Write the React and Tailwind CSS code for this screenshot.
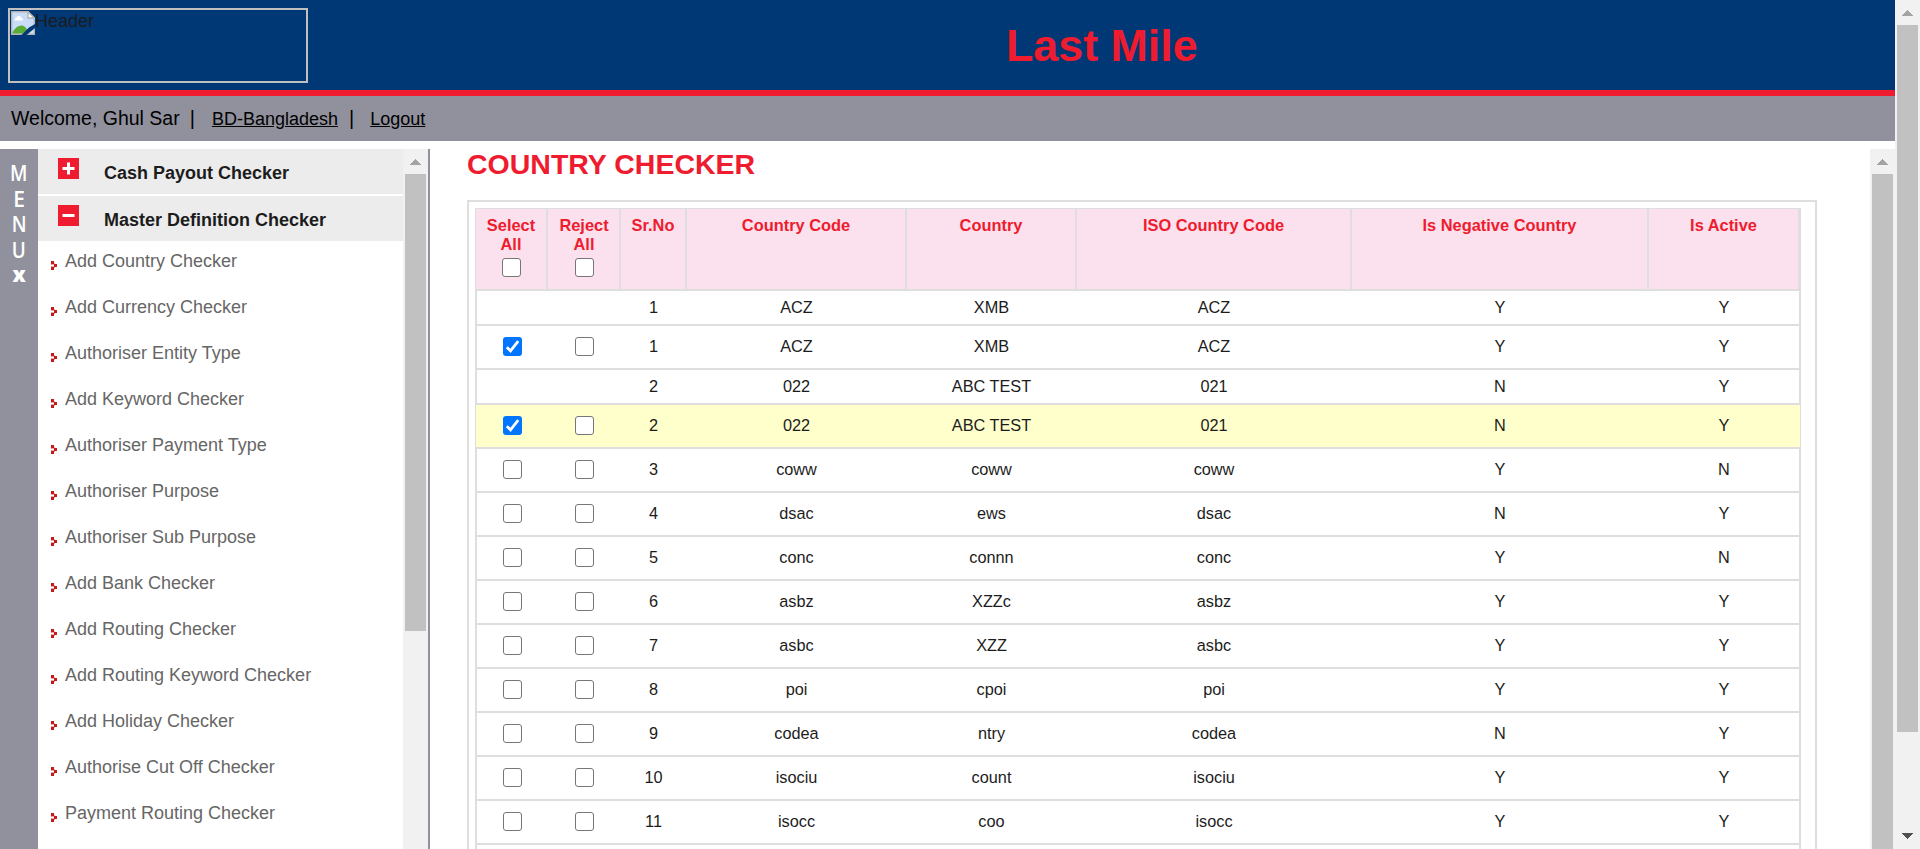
const FONT = 'font-["Liberation_Sans",Arial,sans-serif]';
const COLS = "grid grid-cols-[72px_73px_66px_220px_170px_275px_297px_1fr]";

const menuItems = [
  "Add Country Checker",
  "Add Currency Checker",
  "Authoriser Entity Type",
  "Add Keyword Checker",
  "Authoriser Payment Type",
  "Authoriser Purpose",
  "Authoriser Sub Purpose",
  "Add Bank Checker",
  "Add Routing Checker",
  "Add Routing Keyword Checker",
  "Add Holiday Checker",
  "Authorise Cut Off Checker",
  "Payment Routing Checker",
];

const rows = [
  { old: true, cells: ["1", "ACZ", "XMB", "ACZ", "Y", "Y"] },
  { checked: true, cells: ["1", "ACZ", "XMB", "ACZ", "Y", "Y"] },
  { old: true, cells: ["2", "022", "ABC TEST", "021", "N", "Y"] },
  { checked: true, hot: true, cells: ["2", "022", "ABC TEST", "021", "N", "Y"] },
  { cells: ["3", "coww", "coww", "coww", "Y", "N"] },
  { cells: ["4", "dsac", "ews", "dsac", "N", "Y"] },
  { cells: ["5", "conc", "connn", "conc", "Y", "N"] },
  { cells: ["6", "asbz", "XZZc", "asbz", "Y", "Y"] },
  { cells: ["7", "asbc", "XZZ", "asbc", "Y", "Y"] },
  { cells: ["8", "poi", "cpoi", "poi", "Y", "Y"] },
  { cells: ["9", "codea", "ntry", "codea", "N", "Y"] },
  { cells: ["10", "isociu", "count", "isociu", "Y", "Y"] },
  { cells: ["11", "isocc", "coo", "isocc", "Y", "Y"] },
];

const headers = ["Sr.No", "Country Code", "Country", "ISO Country Code", "Is Negative Country", "Is Active"];

function Check({ checked }) {
  if (checked) {
    return (
      <span className="block size-[19px] shrink-0 rounded-[3px] bg-[#0075ff]">
        <svg viewBox="0 0 19 19" className="block size-[19px]">
          <path d="M3.8 10.2 L7.5 13.8 L15.2 4.2" fill="none" stroke="#fff" strokeWidth="2.8" />
        </svg>
      </span>
    );
  }
  return <span className="block size-[19px] shrink-0 rounded-[3px] border border-[#767676] bg-white" />;
}

function ScrollBar({ thumb, down }) {
  return (
    <div className="flex w-[25px] shrink-0 flex-col items-center bg-[#f1f1f1]">
      <svg viewBox="0 0 25 25" className="block size-[25px] shrink-0" shapeRendering="crispEdges">
        <path d="M7 16 L12.5 10 L18 16 Z" fill="#a3a3a3" />
      </svg>
      <div className={"w-[21px] shrink-0 bg-[#c1c1c1] " + thumb} />
      {down && (
        <svg viewBox="0 0 25 25" className="mt-auto block size-[25px] shrink-0" shapeRendering="crispEdges">
          <path d="M7 9 L18 9 L12.5 15 Z" fill="#505050" />
        </svg>
      )}
    </div>
  );
}

function BrokenImage() {
  return (
    <svg viewBox="0 0 24 24" className="block size-6 shrink-0">
      <path d="M0.7 0.7 H17 L23.3 7 V23.3 H0.7 Z" fill="#c9dcf8" stroke="#b4b4b4" strokeWidth="1.4" />
      <path d="M3.5 9.5 C3.5 7 5.5 6.8 6 6 C7 3.8 10 4.5 10 6.8 C12 6.8 12.5 9 11.5 9.5 Z" fill="#fff" />
      <path d="M1.5 22.5 V21 C5 15.5 9 13.5 12.5 15 C15 16 16.5 18.5 18 22.5 Z" fill="#5aac36" />
      <path d="M17 0.7 V7 H23.3 Z" fill="#fff" stroke="#b4b4b4" strokeWidth="1.4" />
      <path d="M24 13 L18 16.5 L10.5 24 H15.5 L24 17 Z" fill="#003876" />
    </svg>
  );
}

function Bullet() {
  return (
    <svg viewBox="0 0 6 9" className="mt-[7px] block h-[9px] w-1.5 shrink-0" shapeRendering="crispEdges">
      <path d="M0 0h3v3h-3z M3 3h3v3h-3z M0 6h3v3h-3z" fill="#c41a1a" />
      <path d="M0 3h3v1h-3z M0 5h3v1h-3z M3 2h1v1h-1z M3 6h1v1h-1z" fill="#eaa0a0" />
    </svg>
  );
}

function Group({ open, label }) {
  return (
    <div className="flex h-[45px] shrink-0 bg-[#ececec] pl-5">
      <svg viewBox="0 0 21 21" className="mt-[9px] block size-[21px] shrink-0">
        <rect width="21" height="21" fill="#ee1c2e" />
        <path d={open ? "M4.5 10.5 H16.5" : "M4.5 10.5 H16.5 M10.5 4.5 V16.5"} stroke="#fff" strokeWidth="3" />
      </svg>
      <span className="ml-[25px] mt-[13px] text-[18px] font-bold leading-[22px] text-[#1c1c1c]">{label}</span>
    </div>
  );
}

export default function App() {
  return (
    <div className={"flex h-[849px] w-[1920px] overflow-hidden bg-white text-black " + FONT}>
      <div className="flex w-[1895px] flex-col">
        <header className="flex h-24 shrink-0 border-b-[6px] border-[#ee1c2e] bg-[#003876]">
          <div className="ml-2 mt-2 flex h-[75px] w-[300px] border-2 border-[#c0c0c0] pl-px pt-px">
            <BrokenImage />
            <span className="text-[18px] leading-[20px] text-[#1c1c1c]">Header</span>
          </div>
          <h1 className="ml-[698px] mt-[19px] text-[44.8px] font-bold leading-[52px] text-[#ee1c2e]">Last Mile</h1>
        </header>
        <div className="flex h-[45px] shrink-0 items-start bg-[#91919d] pl-[11px] text-[18px] leading-[22px]">
          <span className="mt-[11px] text-[19.5px]">Welcome, Ghul Sar</span>
          <span className="ml-[10px] mt-[11px] text-[20px]">|</span>
          <span className="ml-[17px] mt-3 underline">BD-Bangladesh</span>
          <span className="ml-[11px] mt-[11px] text-[20px]">|</span>
          <span className="ml-[16px] mt-3 underline">Logout</span>
        </div>
        <div className="mt-2 flex h-[700px] shrink-0">
          <div className='flex w-[38px] shrink-0 flex-col items-center bg-[#91919d] pt-3 font-["Open_Sans",sans-serif] text-[21px] font-semibold leading-[25.6px] text-white'>
            <span className="scale-x-90">M</span>
            <span>E</span>
            <span className="scale-x-90">N</span>
            <span className="scale-x-90">U</span>
            <span className="font-extrabold leading-[22px]">x</span>
          </div>
          <nav className="flex w-[392px] shrink-0 border-r-2 border-[#91919d]">
            <div className="flex w-[365px] flex-col overflow-hidden">
              <Group label="Cash Payout Checker" />
              <div className="h-0.5 shrink-0" />
              <Group open label="Master Definition Checker" />
              <div className="flex flex-col pl-[13px] pt-[9px]">
                {menuItems.map((m) => (
                  <div key={m} className="flex h-[46px] shrink-0 items-start text-[18px] leading-[22px] text-[#666]">
                    <span className="mt-1">
                      <Bullet />
                    </span>
                    <span className="ml-2">{m}</span>
                  </div>
                ))}
              </div>
            </div>
            <ScrollBar thumb="h-[457px]" />
          </nav>
          <main className="flex min-w-0 flex-1 flex-col overflow-hidden pl-[37px]">
            <h2 className="h-[51px] shrink-0 text-[28.5px] font-bold leading-[30px] text-[#ee1c2e]">COUNTRY CHECKER</h2>
            <div className="w-[1350px] shrink-0 border-2 border-[#dedede] px-1.5 pt-1.5">
              <div className="w-[1326px] border-x border-t border-[#dedede] text-center">
                <div className={COLS + " h-[82px] border-b-2 border-[#dedede] bg-[#fbe0ed] text-[16.4px] font-bold leading-[19px] text-[#ee1c2e]"}>
                  {["Select", "Reject"].map((h) => (
                    <div key={h} className="flex flex-col items-center border-r-2 border-[#dedede] pt-[7px] even:pl-px">
                      <span>{h}</span>
                      <span>All</span>
                      <span className="mt-1">
                        <Check />
                      </span>
                    </div>
                  ))}
                  {headers.map((h) => (
                    <div key={h} className="border-r-2 border-[#dedede] pt-[7px]">
                      {h}
                    </div>
                  ))}
                </div>
                {rows.map((r, i) => (
                  <div
                    key={i}
                    className={
                      COLS +
                      " items-center border-b-2 border-[#dedede] text-[16.3px] leading-[19px] text-[#1c1c1c] " +
                      (r.old ? "h-[35px] " : "h-[44px] pb-px ") +
                      (r.hot ? "bg-[#ffffcc]" : "shadow-[inset_1px_0_#dedede,inset_-1px_0_#dedede]")
                    }
                  >
                    <div className="flex justify-center pl-px">{!r.old && <Check checked={r.checked} />}</div>
                    <div className="flex justify-center">{!r.old && <Check />}</div>
                    {r.cells.map((c, j) => (
                      <div key={j} className="pr-px">
                        {c}
                      </div>
                    ))}
                  </div>
                ))}
                <div className="h-[44px] shadow-[inset_1px_0_#dedede,inset_-1px_0_#dedede]" />
              </div>
            </div>
          </main>
          <ScrollBar thumb="h-[675px]" />
        </div>
      </div>
      <ScrollBar thumb="h-[707px]" down />
    </div>
  );
}
